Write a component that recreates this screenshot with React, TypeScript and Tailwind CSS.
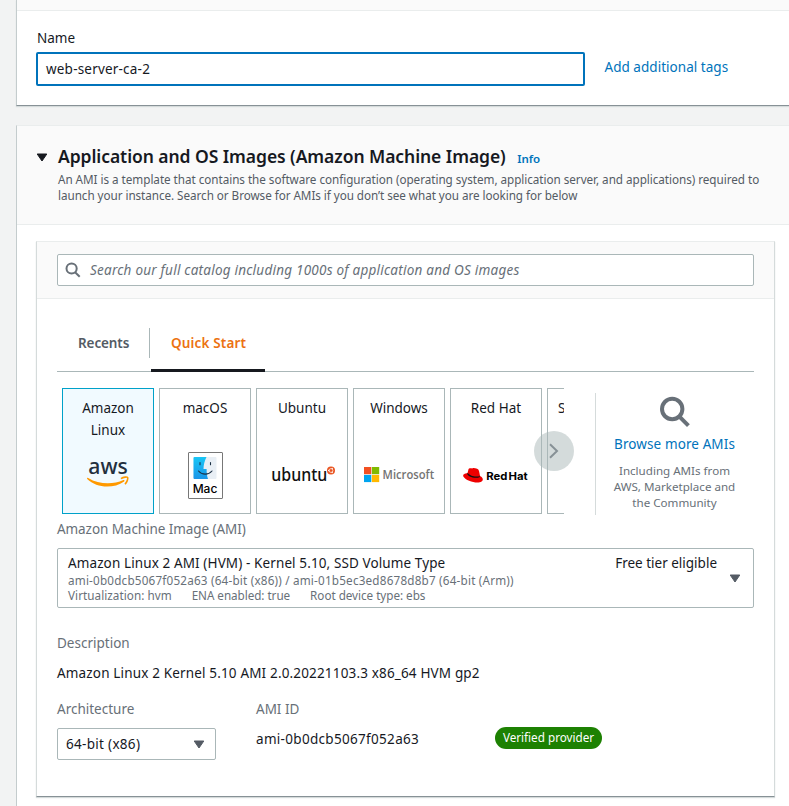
import type { ReactNode } from 'react';

function SearchIcon({ size, stroke }: { size: number; stroke: number }) {
  return (
    <svg width={size} height={size} viewBox="0 0 16 16" fill="none" stroke="#687078" strokeWidth={stroke}>
      <circle cx="6.6" cy="6.5" r="5.1" />
      <path d="M10.1 10.2 L14.7 14.8" />
    </svg>
  );
}

function Caret({ color }: { color: string }) {
  return (
    <svg width="12" height="9" viewBox="0 0 12 9" className="shrink-0">
      <path d="M1.2 1 H10.8 L6 8 Z" fill={color} stroke={color} strokeLinejoin="round" />
    </svg>
  );
}

function AwsLogo() {
  return (
    <svg width="46" height="34" viewBox="0 0 46 34" className="mt-[15px] overflow-visible">
      <text x="3.3" y="18.3" fontFamily="Noto Sans" fontSize="22.5" fontWeight="500" fill="#232f3e" textLength="39.5" lengthAdjust="spacingAndGlyphs">aws</text>
      <path d="M2 22 Q2.3 21.4 3.2 21.9 C14 28.6 28 28.8 38.4 24 Q40.2 23.8 39.2 25.4 C28 33.2 11.5 32 2.2 23 Z" fill="#ff9900" />
      <path d="M36 22.6 C38.5 20.8 42.3 20.8 42.7 21.6 C43.1 22.8 42 26.2 40 28.3" fill="none" stroke="#ff9900" strokeWidth="1.6" />
    </svg>
  );
}

function MacLogo() {
  return (
    <div className="mt-[33px] flex h-[47px] w-[35px] flex-col items-center rounded-[1px] border border-[#777] bg-white pt-[4px]">
      <svg width="24" height="22" viewBox="0 0 24 22">
        <defs>
          <linearGradient id="finder" x1="0" y1="0" x2="0" y2="1">
            <stop offset="0" stopColor="#18c6f5" />
            <stop offset="1" stopColor="#1a95e8" />
          </linearGradient>
        </defs>
        <rect x="0.5" width="23" height="22" rx="1" fill="#e9eff5" />
        <path d="M1.5 0 H13.5 C11.5 4 10.5 8 10.5 12 H13.6 C13.6 16 14 19 15 22 H1.5 Q0.5 22 0.5 21 V1 Q0.5 0 1.5 0 Z" fill="url(#finder)" />
        <path d="M7 5.5 V7.8 M17.5 5.5 V7.8 M5.5 14 C9 18.2 15.5 18.2 19 14" fill="none" stroke="#1c3145" strokeWidth="1.1" strokeLinecap="round" />
      </svg>
      <span className="font-['Inter'] text-[12px] leading-[19px] font-medium text-black">Mac</span>
    </div>
  );
}

function UbuntuLogo() {
  return (
    <svg width="66" height="24" viewBox="0 0 66 24" className="mt-[44px] overflow-visible">
      <text x="2.3" y="17.6" fontFamily="Noto Sans" fontSize="18" fontWeight="500" fill="#111" textLength="56" lengthAdjust="spacingAndGlyphs">ubuntu</text>
      <circle cx="62" cy="7.5" r="4" fill="#e95420" />
      <circle cx="62" cy="7.5" r="1.9" fill="none" stroke="#fff" strokeWidth="0.7" />
      <circle cx="59.7" cy="7.5" r="0.7" fill="#fff" />
      <circle cx="63.2" cy="5.5" r="0.7" fill="#fff" />
      <circle cx="63.2" cy="9.5" r="0.7" fill="#fff" />
    </svg>
  );
}

function MicrosoftLogo() {
  return (
    <svg width="72" height="18" viewBox="0 0 72 18" className="mt-[47px] overflow-visible">
      <rect x="1" y="1" width="7.3" height="7.2" fill="#f25022" />
      <rect x="8.9" y="1" width="7.3" height="7.2" fill="#7fba00" />
      <rect x="1" y="8.9" width="7.3" height="7.2" fill="#00a4ef" />
      <rect x="8.9" y="8.9" width="7.3" height="7.2" fill="#ffb900" />
      <text x="19.6" y="13" fontFamily="Open Sans" fontSize="12" fontWeight="600" fill="#737373" textLength="51.5" lengthAdjust="spacingAndGlyphs">Microsoft</text>
    </svg>
  );
}

function RedHatLogo() {
  return (
    <svg width="66" height="18" viewBox="0 0 66 18" className="mt-[47px] overflow-visible">
      <g transform="translate(-0.7 0.7)">
        <path d="M6.2 2.5 C6.8 1 8.5 1.4 10 1.8 C11 0.8 15 1.8 16.2 3 C17.3 5 17.2 8 18 9.5 C21 11 21.2 13.5 19.3 14.8 C15 17.5 3.5 14 1.2 10 C0 7.5 2.5 6.7 5.2 6.5 Z" fill="#ee0000" />
        <path d="M5 6.8 C4.5 9.5 12 12.3 17.2 10.6 L17.8 9.2 C13 11 7 8.7 5.3 6 Z" fill="#111" />
      </g>
      <text x="23.2" y="14" fontFamily="Inter" fontSize="11" fontWeight="700" fill="#000" wordSpacing="-1.5" textLength="41.5" lengthAdjust="spacingAndGlyphs">Red Hat</text>
    </svg>
  );
}

function Tile({ name, selected, children }: { name: string; selected?: boolean; children?: ReactNode }) {
  return (
    <div
      className={
        'flex h-[126px] w-[92px] shrink-0 flex-col items-center border pt-[8px] ' +
        (selected ? 'border-[#00a1c9] bg-[#f1faff]' : 'border-[#aab7b8] bg-white')
      }
    >
      <div className="w-[70px] text-center leading-[22px]">{name}</div>
      {children}
    </div>
  );
}

export default function App() {
  return (
    <div className="h-[806px] w-[789px] overflow-hidden bg-[#f2f3f3] pl-4 font-['Noto_Sans',sans-serif] text-[13.5px] text-[#16191f]">
      <section className="h-[106px] border-b border-l border-b-[#879196] border-l-[#c4cccd] bg-white shadow-[0_1px_1px_#d5dbdb]">
        <div className="h-[11px] border-b border-[#eaeded] bg-[#fafafa]" />
        <div className="flex pt-[16px] pl-[19px]">
          <div className="w-[549px]">
            <div className="pl-px leading-[22px]">Name</div>
            <div className="mt-[3px] flex h-[34px] items-center rounded-[2px] border-2 border-[#0073bb] pl-2 tracking-[0.2px]">web-server-ca-2</div>
          </div>
          <a className="mt-[29px] ml-[19.5px] leading-[22px] tracking-[0.03px] text-[#0073bb]">Add additional tags</a>
        </div>
      </section>

      <section className="mt-[19px] h-[700px] border-t border-l border-t-[#eaeded] border-l-[#c4cccd] bg-white">
        <header className="flex h-[99px] border-b border-[#eaeded] bg-[#fafafa] pt-[19px] pl-[19px]">
          <div className="mt-[8px] w-[22px]"><Caret color="#16191f" /></div>
          <div>
            <div className="flex items-baseline leading-[22px] whitespace-nowrap">
              <h2 className="text-[17.5px] font-semibold tracking-[-0.07px]">Application and OS Images (Amazon Machine Image)</h2>
              <a className="ml-[11.5px] text-[11.5px] font-semibold text-[#0073bb]">Info</a>
            </div>
            <p className="mt-[1px] text-[11.7px] leading-4 tracking-[-0.037px] whitespace-nowrap text-[#545b64]">
              An AMI is a template that contains the software configuration (operating system, application server, and applications) required to<br />
              <span className="tracking-[-0.05px]">launch your instance. Search or Browse for AMIs if you don’t see what you are looking for below</span>
            </p>
          </div>
        </header>

        <div className="mt-[16px] ml-[19px] h-[556px] w-[739px] border border-[#d5dbdb] border-t-[#eaeded] border-b-[#879196] bg-white shadow-[0_1px_1px_#d5dbdb]">
          <div className="h-[57px] border-b border-[#eaeded] bg-[#fafafa] pt-3 pl-5">
            <div className="flex h-8 w-[697px] items-center rounded-[2px] border border-[#aab7b8] bg-white pl-[7px]">
              <SearchIcon size={16} stroke={2} />
              <span className="mt-px ml-[9px] text-[13.5px] tracking-[0.23px] text-[#687078] italic">Search our full catalog including 1000s of application and OS images</span>
            </div>
          </div>

          <div className="w-[717px] pl-5">
            <div className="flex h-[73px] items-end border-b border-[#aab7b8] leading-[22px] font-semibold">
              <div className="mb-[13px] flex h-[30px] w-[93px] items-center border-r border-[#aab7b8] pl-[21px] tracking-[-0.1px] text-[#545b64]">Recents</div>
              <div className="-mb-px ml-px h-[40px] w-[114px] border-b-[3px] border-[#16191f] pl-5 text-[#ec7211]">
                <span className="tracking-[0.15px]">Quick Start</span>
              </div>
            </div>

            <div className="relative mt-[16px] flex">
              <div className="flex w-[507px] gap-[5px] overflow-hidden pl-[5px]">
                <Tile name="Amazon Linux" selected><AwsLogo /></Tile>
                <Tile name="macOS"><MacLogo /></Tile>
                <Tile name="Ubuntu"><UbuntuLogo /></Tile>
                <Tile name="Windows"><MicrosoftLogo /></Tile>
                <Tile name="Red Hat"><RedHatLogo /></Tile>
                <div className="h-[126px] w-[92px] shrink-0 border border-[#aab7b8] pt-[8px] pl-[10px] leading-[22px] whitespace-nowrap">S</div>
              </div>
              <div className="absolute top-[43px] left-[477px] flex size-10 items-center justify-center rounded-full bg-[#aab7b8]/50">
                <svg width="10" height="16" viewBox="0 0 10 16" fill="none" stroke="#879196" strokeWidth="2"><path d="M1 1.2 L8 8 L1 14.8" /></svg>
              </div>
              <div className="mt-[5px] ml-[31px] flex h-[122px] w-[158px] flex-col items-center border-l border-[#d5dbdb] pt-[3px] text-center">
                <SearchIcon size={32} stroke={2} />
                <a className="mt-[5px] leading-[22px] tracking-[0.1px] whitespace-nowrap text-[#0073bb]">Browse more AMIs</a>
                <p className="mt-[8px] text-[11.6px] leading-4 whitespace-nowrap text-[#687078]">Including AMIs from<br />AWS, Marketplace and<br />the Community</p>
              </div>
            </div>

            <div className="mt-[3px] leading-[22px] tracking-[-0.07px] text-[#687078]">Amazon Machine Image (AMI)</div>
            <div className="mt-[8px] flex h-[60px] justify-between rounded-[2px] border border-[#aab7b8] pt-[4px] pr-[12px] pl-[10px]">
              <div>
                <div className="leading-[20px] tracking-[0.11px]">Amazon Linux 2 AMI (HVM) - Kernel 5.10, SSD Volume Type</div>
                <div className="text-[11.7px] leading-[15px] tracking-[0.2px] text-[#687078]">ami-0b0dcb5067f052a63 (64-bit (x86)) / ami-01b5ec3ed8678d8b7 (64-bit (Arm))</div>
                <div className="flex gap-5 text-[11.7px] leading-[15px] text-[#687078]">
                  <span className="tracking-[0.05px]">Virtualization: hvm</span><span className="tracking-[-0.05px]">ENA enabled: true</span><span className="tracking-[-0.03px]">Root device type: ebs</span>
                </div>
              </div>
              <div className="flex">
                <div className="mr-[12px] leading-[20px]">Free tier eligible</div>
                <div className="mt-[21px]"><Caret color="#545b64" /></div>
              </div>
            </div>

            <div className="mt-[24px] leading-[22px] text-[#687078]">Description</div>
            <div className="mt-[8px] leading-[22px] tracking-[0.16px]">Amazon Linux 2 Kernel 5.10 AMI 2.0.20221103.3 x86_64 HVM gp2</div>

            <div className="mt-[14px] flex">
              <div className="w-[199px]">
                <div className="leading-[22px] text-[#687078]">Architecture</div>
                <div className="mt-[8px] flex h-8 w-[159px] items-center justify-between rounded-[2px] border border-[#aab7b8] pr-[10px] pl-2">
                  <span className="tracking-[0.3px]">64-bit (x86)</span><Caret color="#545b64" />
                </div>
              </div>
              <div className="w-[239px]">
                <div className="leading-[22px] text-[#687078]">AMI ID</div>
                <div className="mt-[8px] leading-[22px] tracking-[0.31px]">ami-0b0dcb5067f052a63</div>
              </div>
              <div className="mt-[29px] flex h-[22px] w-[107px] items-center justify-center rounded-full bg-[#1d8102] text-[11.7px] whitespace-nowrap text-white">Verified provider</div>
            </div>
          </div>
        </div>
      </section>
    </div>
  );
}
